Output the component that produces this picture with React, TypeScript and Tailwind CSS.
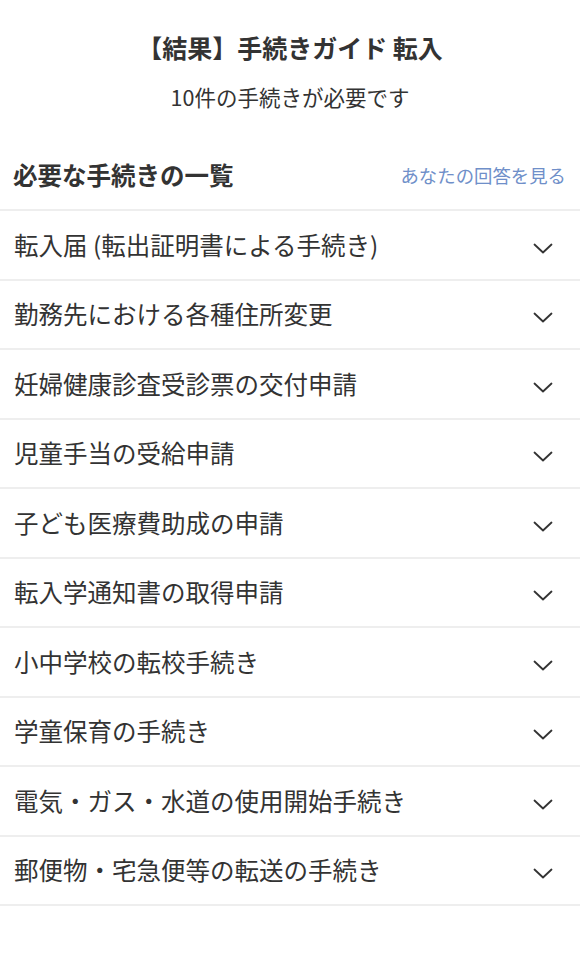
const procedures = [
    "転入届 (転出証明書による手続き)",
    "勤務先における各種住所変更",
    "妊婦健康診査受診票の交付申請",
    "児童手当の受給申請",
    "子ども医療費助成の申請",
    "転入学通知書の取得申請",
    "小中学校の転校手続き",
    "学童保育の手続き",
    "電気・ガス・水道の使用開始手続き",
    "郵便物・宅急便等の転送の手続き",
];

const Chevron = () => (
    <svg width="20" height="11" viewBox="0 0 20 11" fill="none" className="mt-[7px]">
        <polyline points="1.5,1.5 10,9.5 18.5,1.5" stroke="#333333" strokeWidth="1.8" strokeLinecap="round" strokeLinejoin="round" />
    </svg>
);

const App = () => {
    return (
        <div
            className="min-h-screen bg-white text-[#333333]"
            style={{ fontFamily: '"Noto Sans CJK JP", "Noto Sans", sans-serif' }}
        >
            <div className="pt-[32px] text-center">
                <h1 className="text-[25px] leading-[30px] font-bold">【結果】手続きガイド 転入</h1>
                <p className="mt-[20px] text-[21.5px] leading-[30px]">10件の手続きが必要です</p>
            </div>

            <div className="mt-[30px] h-[67px] flex items-center justify-between pl-[13px] pr-[14px]">
                <h2 className="text-[24.5px] font-bold">必要な手続きの一覧</h2>
                <a href="#" className="text-[18.4px] text-[#6f8fc9]">
                    あなたの回答を見る
                </a>
            </div>

            <ul className="border-t-2 border-[#eeeeee]">
                {procedures.map((name) => (
                    <li
                        key={name}
                        className="h-[69.5px] border-b-2 border-[#eeeeee] flex items-center justify-between pl-[14px] pr-[27px]"
                    >
                        <span className="text-[24.5px] leading-none">{name}</span>
                        <Chevron />
                    </li>
                ))}
            </ul>
        </div>
    );
};

export default App;
